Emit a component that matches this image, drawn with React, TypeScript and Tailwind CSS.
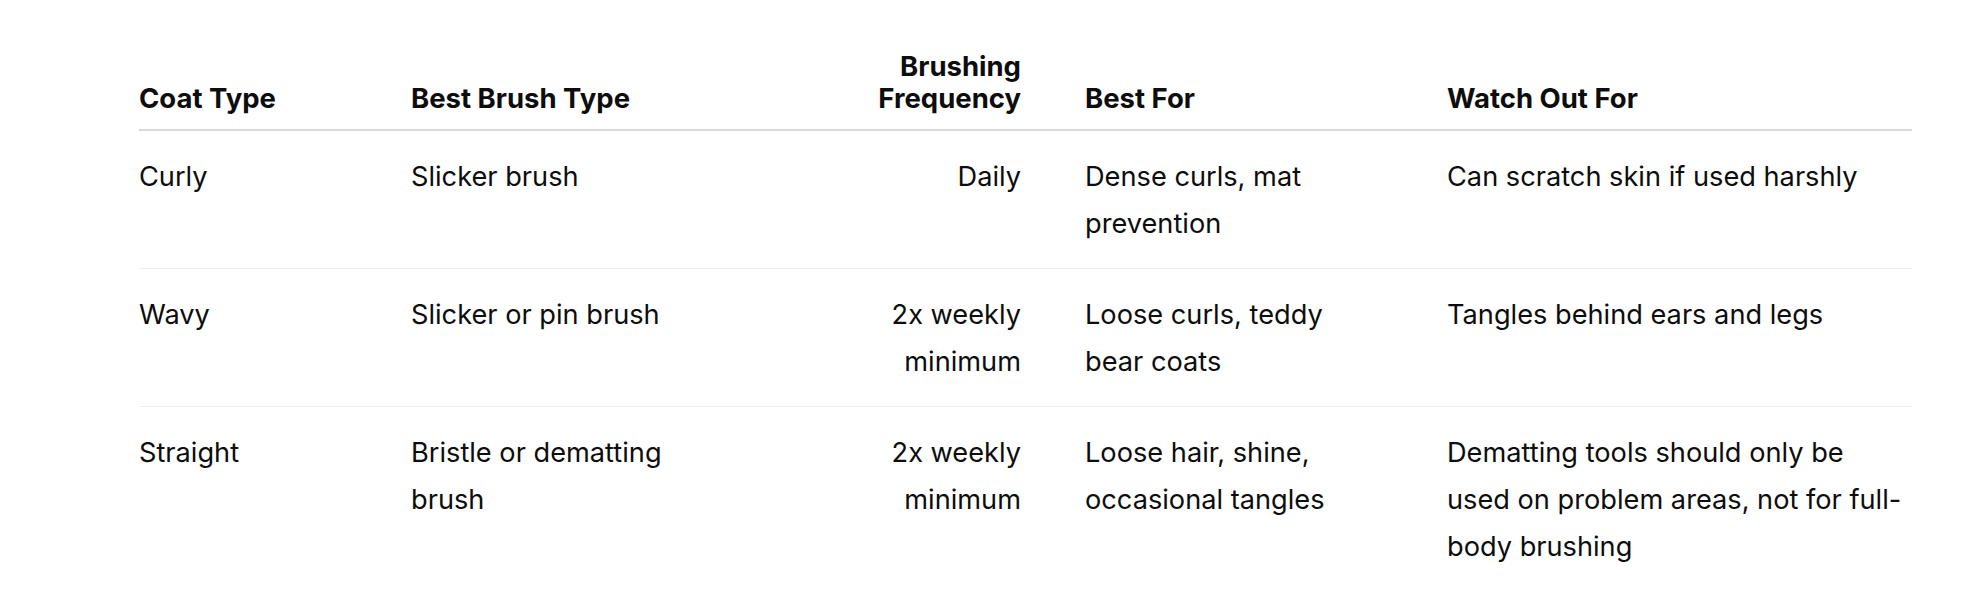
import React from "react";

const rows = [
  {
    coat: "Curly",
    brush: "Slicker brush",
    freq: "Daily",
    bestFor: "Dense curls, mat prevention",
    watch: "Can scratch skin if used harshly",
  },
  {
    coat: "Wavy",
    brush: "Slicker or pin brush",
    freq: "2x weekly minimum",
    bestFor: "Loose curls, teddy bear coats",
    watch: "Tangles behind ears and legs",
  },
  {
    coat: "Straight",
    brush: "Bristle or dematting brush",
    freq: "2x weekly minimum",
    bestFor: "Loose hair, shine, occasional tangles",
    watch: "Dematting tools should only be used on problem areas, not for full-body brushing",
  },
];

export default function App() {
  return (
    <div
      className="min-h-[604px] w-full bg-white pt-[50px] text-[#0d0d0d]"
      style={{ fontFamily: "Inter, 'Noto Sans', sans-serif" }}
    >
      <table className="ml-[139px] w-[1773px] table-fixed border-collapse text-[27.2px]">
        <colgroup>
          <col className="w-[240px]" />
          <col className="w-[371px]" />
          <col className="w-[303px]" />
          <col className="w-[362px]" />
          <col className="w-[497px]" />
        </colgroup>
        <thead>
          <tr className="border-b-2 border-[#d9d9d9] text-[27.5px]">
            <th className="pb-[15px] pr-[32px] text-left align-bottom font-bold leading-[32px]">Coat Type</th>
            <th className="px-[32px] pb-[15px] text-left align-bottom font-bold leading-[32px]">Best Brush Type</th>
            <th className="px-[32px] pb-[15px] text-right align-bottom font-bold leading-[32px]">Brushing Frequency</th>
            <th className="px-[32px] pb-[15px] text-left align-bottom font-bold leading-[32px]">Best For</th>
            <th className="pb-[15px] pl-[32px] text-left align-bottom font-bold leading-[32px]">Watch Out For</th>
          </tr>
        </thead>
        <tbody>
          {rows.map((r, i) => (
            <tr key={r.coat} className={i < rows.length - 1 ? "border-b border-[#efefef]" : ""}>
              <td className="py-[21.5px] pr-[32px] align-top leading-[47px]">{r.coat}</td>
              <td className="px-[32px] py-[21.5px] align-top leading-[47px]">{r.brush}</td>
              <td className="px-[32px] py-[21.5px] text-right align-top leading-[47px]">{r.freq}</td>
              <td className="px-[32px] py-[21.5px] align-top leading-[47px]">{r.bestFor}</td>
              <td className="py-[21.5px] pl-[32px] align-top leading-[47px]">{r.watch}</td>
            </tr>
          ))}
        </tbody>
      </table>
    </div>
  );
}
